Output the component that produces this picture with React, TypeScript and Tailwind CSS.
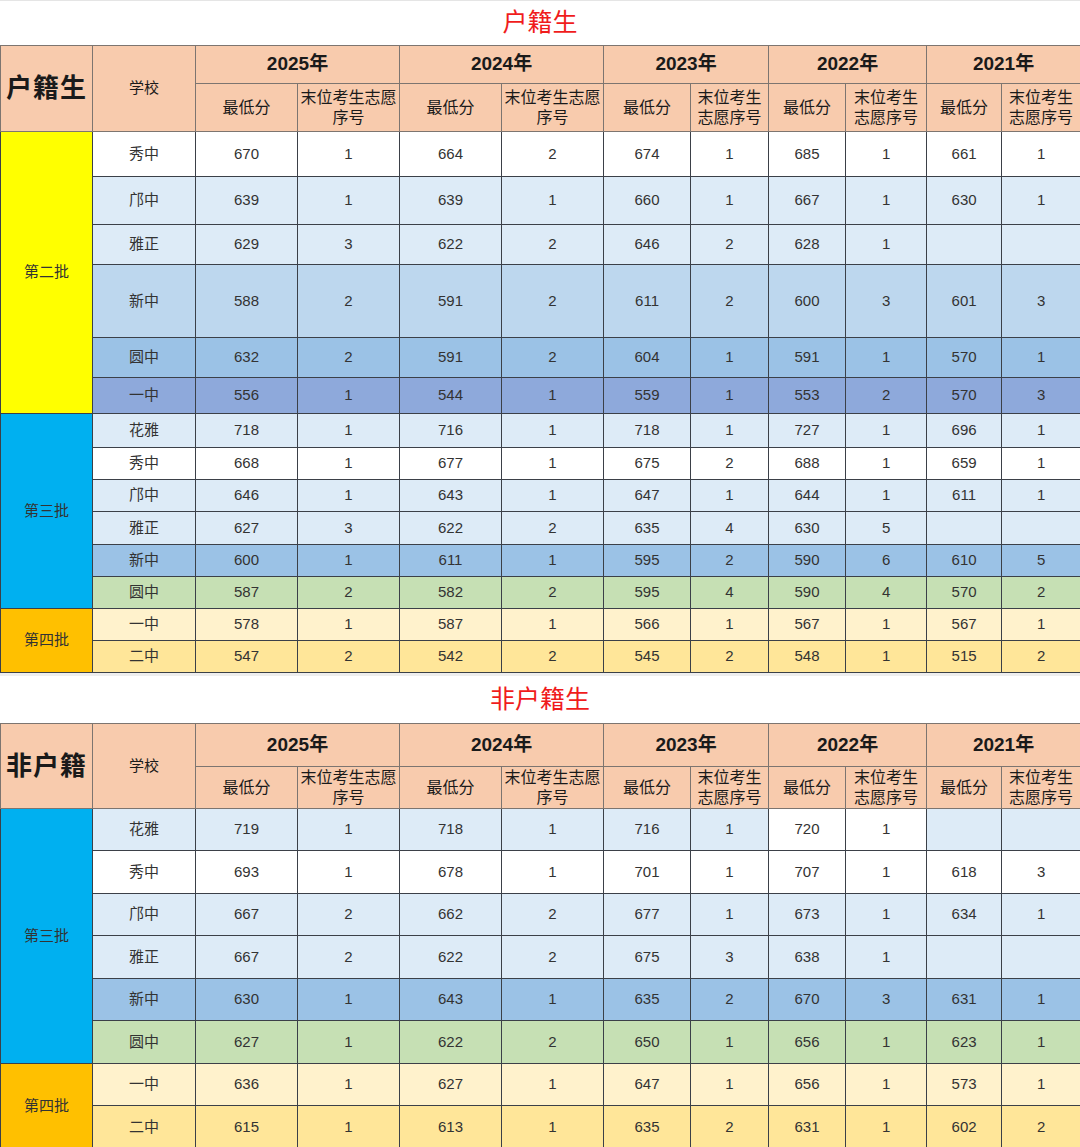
import React from "react";

type Row = {
  school: string;
  bg: string;
  h: string;
  vals: string[];
  // per-column background overrides, index into vals
  cellBg?: Record<number, string>;
};

type Group = { batch: string; bg: string; rows: Row[] };

const W = "bg-white";
const L = "bg-[#ddebf7]";
const M = "bg-[#bdd7ee]";
const D = "bg-[#9bc2e6]";
const P = "bg-[#8ea9db]";
const G = "bg-[#c6e0b4]";
const Y1 = "bg-[#fff2cc]";
const Y2 = "bg-[#ffe699]";

const YELLOW = "bg-[#ffff00]";
const CYAN = "bg-[#00b0f0]";
const AMBER = "bg-[#ffc000]";

const years = [
  { y: "2025", wide: true },
  { y: "2024", wide: true },
  { y: "2023", wide: false },
  { y: "2022", wide: false },
  { y: "2021", wide: false },
];

const widths = [92, 103, 102, 102, 102, 102, 87, 78, 77, 81, 75, 79];

const local: Group[] = [
  {
    batch: "第二批",
    bg: YELLOW,
    rows: [
      { school: "秀中", bg: W, h: "h-[45px]", vals: ["670", "1", "664", "2", "674", "1", "685", "1", "661", "1"] },
      { school: "邝中", bg: L, h: "h-[48px]", vals: ["639", "1", "639", "1", "660", "1", "667", "1", "630", "1"] },
      { school: "雅正", bg: L, h: "h-[40px]", vals: ["629", "3", "622", "2", "646", "2", "628", "1", "", ""] },
      { school: "新中", bg: M, h: "h-[73px]", vals: ["588", "2", "591", "2", "611", "2", "600", "3", "601", "3"] },
      { school: "圆中", bg: D, h: "h-[40px]", vals: ["632", "2", "591", "2", "604", "1", "591", "1", "570", "1"] },
      { school: "一中", bg: P, h: "h-[36px]", vals: ["556", "1", "544", "1", "559", "1", "553", "2", "570", "3"] },
    ],
  },
  {
    batch: "第三批",
    bg: CYAN,
    rows: [
      { school: "花雅", bg: L, h: "h-[34px]", vals: ["718", "1", "716", "1", "718", "1", "727", "1", "696", "1"] },
      { school: "秀中", bg: W, h: "h-[32px]", vals: ["668", "1", "677", "1", "675", "2", "688", "1", "659", "1"] },
      { school: "邝中", bg: L, h: "h-[32px]", vals: ["646", "1", "643", "1", "647", "1", "644", "1", "611", "1"] },
      { school: "雅正", bg: L, h: "h-[33px]", vals: ["627", "3", "622", "2", "635", "4", "630", "5", "", ""] },
      { school: "新中", bg: D, h: "h-[32px]", vals: ["600", "1", "611", "1", "595", "2", "590", "6", "610", "5"] },
      { school: "圆中", bg: G, h: "h-[32px]", vals: ["587", "2", "582", "2", "595", "4", "590", "4", "570", "2"] },
    ],
  },
  {
    batch: "第四批",
    bg: AMBER,
    rows: [
      { school: "一中", bg: Y1, h: "h-[32px]", vals: ["578", "1", "587", "1", "566", "1", "567", "1", "567", "1"] },
      { school: "二中", bg: Y2, h: "h-[32px]", vals: ["547", "2", "542", "2", "545", "2", "548", "1", "515", "2"] },
    ],
  },
];

const nonLocal: Group[] = [
  {
    batch: "第三批",
    bg: CYAN,
    rows: [
      { school: "花雅", bg: L, h: "h-[42px]", vals: ["719", "1", "718", "1", "716", "1", "720", "1", "", ""], cellBg: { 6: W, 7: W } },
      { school: "秀中", bg: W, h: "h-[43px]", vals: ["693", "1", "678", "1", "701", "1", "707", "1", "618", "3"] },
      { school: "邝中", bg: L, h: "h-[42px]", vals: ["667", "2", "662", "2", "677", "1", "673", "1", "634", "1"] },
      { school: "雅正", bg: L, h: "h-[43px]", vals: ["667", "2", "622", "2", "675", "3", "638", "1", "", ""] },
      { school: "新中", bg: D, h: "h-[42px]", vals: ["630", "1", "643", "1", "635", "2", "670", "3", "631", "1"] },
      { school: "圆中", bg: G, h: "h-[43px]", vals: ["627", "1", "622", "2", "650", "1", "656", "1", "623", "1"] },
    ],
  },
  {
    batch: "第四批",
    bg: AMBER,
    rows: [
      { school: "一中", bg: Y1, h: "h-[42px]", vals: ["636", "1", "627", "1", "647", "1", "656", "1", "573", "1"] },
      { school: "二中", bg: Y2, h: "h-[43px]", vals: ["615", "1", "613", "1", "635", "2", "631", "1", "602", "2"] },
    ],
  },
];

const hd = "border border-[#7d7570] bg-[#f8cbad] text-center align-middle text-[#1a1a1a]";
const td = "border border-[#3b4048] text-center align-middle text-[15px] text-[#333]";

function ScoreTable({
  label,
  groups,
  yearH,
  subH,
}: {
  label: string;
  groups: Group[];
  yearH: string;
  subH: string;
}) {
  return (
    <table className="w-[1080px] table-fixed border-collapse">
      <colgroup>
        {widths.map((w, i) => (
          <col key={i} style={{ width: w }} />
        ))}
      </colgroup>
      <thead>
        <tr className={yearH}>
          <th rowSpan={2} className={`${hd} text-[26px] font-bold tracking-[1px]`}>
            {label}
          </th>
          <th rowSpan={2} className={`${hd} text-[15px] font-normal`}>
            学校
          </th>
          {years.map((y) => (
            <th key={y.y} colSpan={2} className={`${hd} text-[19px] font-semibold`}>
              {y.y}年
            </th>
          ))}
        </tr>
        <tr className={subH}>
          {years.map((y) => (
            <React.Fragment key={y.y}>
              <th className={`${hd} text-[16px] font-normal`}>最低分</th>
              <th className={`${hd} whitespace-nowrap text-[16px] font-normal leading-[20px]`}>
                {y.wide ? (
                  <>
                    末位考生志愿
                    <br />
                    序号
                  </>
                ) : (
                  <>
                    末位考生
                    <br />
                    志愿序号
                  </>
                )}
              </th>
            </React.Fragment>
          ))}
        </tr>
      </thead>
      <tbody>
        {groups.map((g) =>
          g.rows.map((r, ri) => (
            <tr key={g.batch + r.school} className={r.h}>
              {ri === 0 && (
                <td rowSpan={g.rows.length} className={`${td} ${g.bg} text-[#1a1a1a]`}>
                  {g.batch}
                </td>
              )}
              <td className={`${td} ${r.bg}`}>{r.school}</td>
              {r.vals.map((v, vi) => (
                <td key={vi} className={`${td} ${r.cellBg?.[vi] ?? r.bg}`}>
                  {v}
                </td>
              ))}
            </tr>
          ))
        )}
      </tbody>
    </table>
  );
}

export default function App() {
  return (
    <div
      className="w-[1080px] bg-white"
      style={{ fontFamily: '"Liberation Sans", "Noto Sans CJK SC", sans-serif' }}
    >
      <div className="flex h-[45px] items-center justify-center border-t border-[#e5e5e5] text-[25px] text-[#f01c1c]">
        户籍生
      </div>
      <ScoreTable label="户籍生" groups={local} yearH="h-[38px]" subH="h-[48px]" />
      <div className="flex h-[50px] items-center justify-center border-t-[3px] border-[#eeeeee] text-[25px] text-[#f01c1c]">
        非户籍生
      </div>
      <ScoreTable label="非户籍" groups={nonLocal} yearH="h-[43px]" subH="h-[42px]" />
    </div>
  );
}
